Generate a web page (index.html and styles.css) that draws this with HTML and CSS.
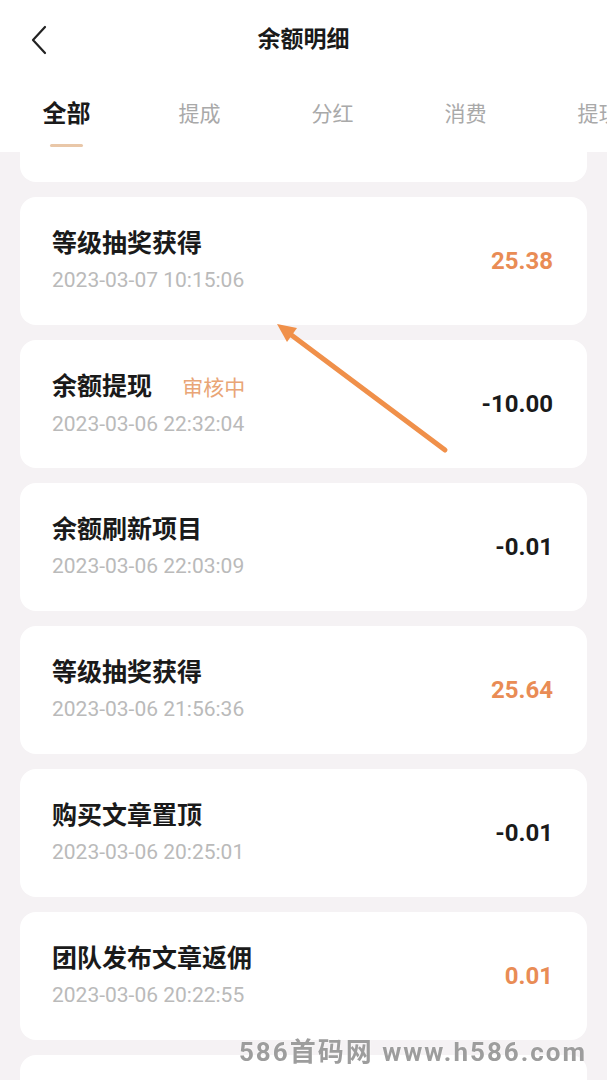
FILE: index.html
```html
<!DOCTYPE html>
<html>
<head>
    <meta charset="utf-8">
    <title>余额明细</title>
    <link rel="stylesheet" href="styles.css">
</head>
<body>
    <div class="header">
        <div class="topbar">
            <a href="#" class="back">
                <svg width="20" height="30" viewBox="0 0 20 30"><path d="M15 2 L3 15 L15 28" fill="none" stroke="#222" stroke-width="2.2" stroke-linecap="round" stroke-linejoin="round"/></svg>
            </a>
            <h1>余额明细</h1>
            <span></span>
        </div>
        <div class="tabs">
            <div class="tab active">全部</div>
            <div class="tab">提成</div>
            <div class="tab">分红</div>
            <div class="tab">消费</div>
            <div class="tab">提现</div>
        </div>
    </div>

    <div class="list">
        <div class="card cut"></div>

        <div class="card">
            <div class="info">
                <div class="name">等级抽奖获得</div>
                <div class="time">2023-03-07 10:15:06</div>
            </div>
            <div class="amount plus">25.38</div>
        </div>

        <div class="card">
            <div class="info">
                <div class="name">余额提现 <span class="status">审核中</span></div>
                <div class="time">2023-03-06 22:32:04</div>
            </div>
            <div class="amount">-10.00</div>
        </div>

        <div class="card">
            <div class="info">
                <div class="name">余额刷新项目</div>
                <div class="time">2023-03-06 22:03:09</div>
            </div>
            <div class="amount">-0.01</div>
        </div>

        <div class="card">
            <div class="info">
                <div class="name">等级抽奖获得</div>
                <div class="time">2023-03-06 21:56:36</div>
            </div>
            <div class="amount plus">25.64</div>
        </div>

        <div class="card">
            <div class="info">
                <div class="name">购买文章置顶</div>
                <div class="time">2023-03-06 20:25:01</div>
            </div>
            <div class="amount">-0.01</div>
        </div>

        <div class="card">
            <div class="info">
                <div class="name">团队发布文章返佣</div>
                <div class="time">2023-03-06 20:22:55</div>
            </div>
            <div class="amount plus">0.01</div>
        </div>

        <div class="card"></div>
    </div>

    <!-- annotation arrow drawn over the screenshot -->
    <svg class="arrow" width="607" height="1080" viewBox="0 0 607 1080">
        <line x1="445" y1="450" x2="290" y2="334" stroke="#f0904a" stroke-width="5" stroke-linecap="round"/>
        <polygon points="277,324 297,328 287,342" fill="#f0904a"/>
    </svg>

    <div class="watermark">586首码网 www.h586.com</div>
</body>
</html>
```

FILE: styles.css
```css
body { margin: 0; background: #f5f2f4; font-family: Roboto, "Noto Sans CJK SC", sans-serif; color: #1a1a1a; min-height: 1080px; position: relative; overflow-x: hidden; }

.header { background: #fff; }
.topbar { height: 80px; display: grid; grid-template-columns: 1fr auto 1fr; align-items: center; }
.back { display: flex; align-items: center; padding-left: 30px; height: 30px; }
.topbar h1 { margin: 0; font-size: 23px; font-weight: 700; line-height: 32px; }

.tabs { height: 72px; display: flex; overflow: hidden; }
.tab { flex: 0 0 133px; text-align: center; padding-top: 18px; line-height: 32px; font-size: 21px; color: #a9a9a9; }
.tab.active { font-size: 24px; font-weight: 700; color: #1a1a1a; }
.tab.active::after { content: ""; display: block; width: 33px; height: 3px; margin: 14px auto 0; background: #e9c7a8; border-radius: 2px; }

.list { display: flex; flex-direction: column; gap: 15px; padding: 0 20px; }
.card { background: #fff; border-radius: 16px; height: 128px; box-sizing: border-box; padding: 30px 34px 31px 32px; display: flex; align-items: center; justify-content: space-between; }
.card.cut { height: 30px; padding: 0; border-radius: 0 0 16px 16px; }

.name { font-size: 25px; font-weight: 600; line-height: 34px; }
.status { font-size: 21px; font-weight: 400; color: #e9a576; margin-left: 24px; }
.time { margin-top: 5px; font-size: 21px; line-height: 28px; color: #bababa; }
.amount { font-size: 24px; font-weight: 700; color: #1a1a1a; }
.amount.plus { color: #e98c55; }

.arrow { position: absolute; left: 0; top: 0; pointer-events: none; }
.watermark { position: fixed; right: 20px; bottom: 13px; font-size: 26px; line-height: 30px; font-weight: 700; letter-spacing: 2px; color: #9d9d9d; text-shadow: 0 0 2px #fff; }
```
